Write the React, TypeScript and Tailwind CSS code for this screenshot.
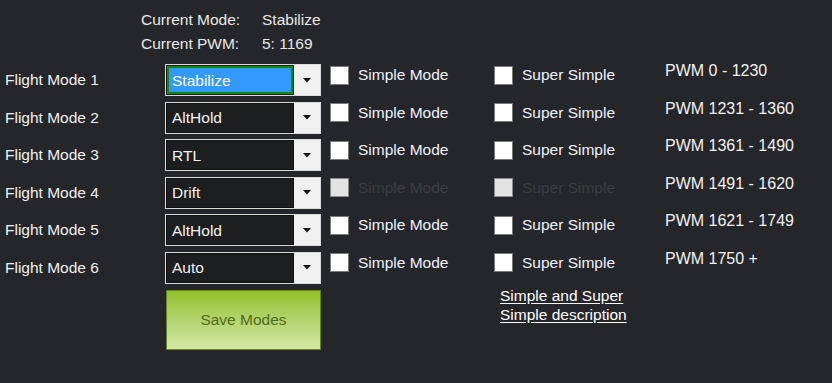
import React from 'react';

type Row = { mode: string; selected?: boolean; disabled?: boolean; pwm: string };

const rows: Row[] = [
  { mode: 'Stabilize', selected: true, pwm: 'PWM 0 - 1230' },
  { mode: 'AltHold', pwm: 'PWM 1231 - 1360' },
  { mode: 'RTL', pwm: 'PWM 1361 - 1490' },
  { mode: 'Drift', disabled: true, pwm: 'PWM 1491 - 1620' },
  { mode: 'AltHold', pwm: 'PWM 1621 - 1749' },
  { mode: 'Auto', pwm: 'PWM 1750 +' },
];

function Combo({ value, selected }: { value: string; selected?: boolean }) {
  return (
    <div className="flex h-[32px] w-[156px] border border-[#d9d9d9] bg-[#1d1e20]">
      {selected ? (
        <div className="m-[1px] flex flex-1 items-center border-2 border-[#118a11] bg-[#3399ff] pl-[3px] pt-[1px] text-white">
          {value}
        </div>
      ) : (
        <div className="flex flex-1 items-center border border-[#111] pl-[5px] pt-[1px] text-[#f2f2f2]">{value}</div>
      )}
      <div className="flex w-[26px] items-center justify-center bg-[#f0f0f0]">
        <svg width="8" height="5" viewBox="0 0 8 5">
          <path d="M0 0 H8 L4 4.5 Z" fill="#111" />
        </svg>
      </div>
    </div>
  );
}

function Check({ label, disabled }: { label: string; disabled?: boolean }) {
  return (
    <div className="flex items-center">
      <div
        className={
          disabled
            ? 'h-[19px] w-[19px] border border-[#8a8a8a] bg-[#e3e3e3]'
            : 'h-[19px] w-[19px] border border-[#7a7a7a] bg-white'
        }
      />
      <span className={disabled ? 'ml-[9px] text-[#3c3d40]' : 'ml-[9px] text-[#eef2ff]'}>{label}</span>
    </div>
  );
}

export default function App() {
  return (
    <div
      className="h-[383px] w-[832px] overflow-hidden bg-[#252629] text-[15.5px] leading-[20px] text-[#f0f0f0]"
      style={{ fontFamily: '"Liberation Sans", Arial, sans-serif' }}
    >
      {/* Current status */}
      <div className="pl-[141px] pt-[8px] leading-[24px] text-[#e8e8e8]">
        <div className="flex">
          <span className="w-[121px]">Current Mode:</span>
          <span>Stabilize</span>
        </div>
        <div className="flex">
          <span className="w-[121px]">Current PWM:</span>
          <span>5: 1169</span>
        </div>
      </div>

      {/* Flight mode rows */}
      <div className="mt-[8px] flex flex-col">
        {rows.map((r, i) => (
          <div key={i} className="flex h-[37.5px] items-start">
            <div className="w-[165px] pl-[5px] pt-[6px]">Flight Mode {i + 1}</div>
            <Combo value={r.mode} selected={r.selected} />
            <div className="ml-[9px] w-[164px] pt-[1px]">
              <Check label="Simple Mode" disabled={r.disabled} />
            </div>
            <div className="w-[171px] pt-[1px]">
              <Check label="Super Simple" disabled={r.disabled} />
            </div>
            <div className="-mt-[3px] text-[16px] text-[#f2f2f2]">{r.pwm}</div>
          </div>
        ))}
      </div>

      {/* Footer actions */}
      <div className="mt-[1px] flex items-start">
        <button className="ml-[166px] h-[60px] w-[155px] border border-[#62841f] bg-gradient-to-b from-[#93c020] to-[#d3e7a4] text-[#4f6d17]">
          Save Modes
        </button>
        <a className="ml-[179px] -mt-[4px] w-[140px] leading-[19px] text-white underline underline-offset-2">
          Simple and Super
          <br />
          Simple description
        </a>
      </div>
    </div>
  );
}
